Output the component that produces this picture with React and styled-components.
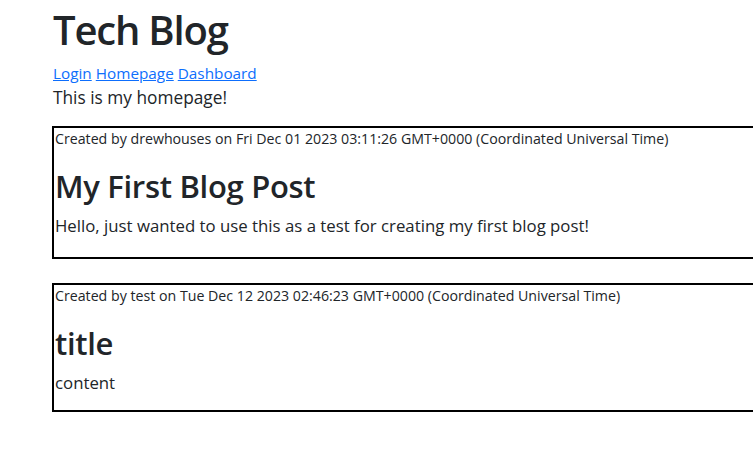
import React from "react";
import styled, { createGlobalStyle } from "styled-components";

const Global = createGlobalStyle`
  html, body { margin: 0; padding: 0; background: #fff; }
  body {
    font-family: "Open Sans", "Noto Sans", sans-serif;
    font-size: 16px;
    line-height: 1.5;
    color: #212529;
    overflow: hidden;
  }
`;

const Page = styled.div`
  padding: 6px 0 0 52px;
`;

const Title = styled.h1`
  margin: 0 0 7px 1px;
  font-size: 40px;
  font-weight: 600;
  line-height: 48px;
  letter-spacing: -1.2px;
`;

const Nav = styled.nav`
  display: flex;
  gap: 4px;
  padding-left: 1px;
  font-size: 15.3px;
  line-height: 24px;
`;

const NavLink = styled.a`
  color: #0d6efd;
  text-decoration: underline;
`;

const Intro = styled.p`
  margin: 0 0 15px 1px;
  font-size: 17.3px;
  line-height: 26px;
`;

const Post = styled.article`
  border: 2px solid #000;
  width: 760px;
  margin-bottom: 24px;
`;

const Meta = styled.small`
  display: block;
  font-size: 14.2px;
  line-height: 22px;
  padding-left: 1px;
`;

const PostTitle = styled.h2`
  margin: 18px 0 8px 1px;
  font-size: 31px;
  font-weight: 600;
  line-height: 37px;
  letter-spacing: -0.3px;
`;

const Body = styled.p`
  margin: 0 0 ${(p) => p.$tail}px 1px;
  font-size: 16.8px;
  line-height: 26px;
`;

const posts = [
  {
    meta: "Created by drewhouses on Fri Dec 01 2023 03:11:26 GMT+0000 (Coordinated Universal Time)",
    title: "My First Blog Post",
    body: "Hello, just wanted to use this as a test for creating my first blog post!",
    tail: 18,
  },
  {
    meta: "Created by test on Tue Dec 12 2023 02:46:23 GMT+0000 (Coordinated Universal Time)",
    title: "title",
    body: "content",
    tail: 14,
  },
];

export default function App() {
  return (
    <>
      <Global />
      <Page>
        <Title>Tech Blog</Title>
        <Nav>
          <NavLink href="#">Login</NavLink>
          <NavLink href="#">Homepage</NavLink>
          <NavLink href="#">Dashboard</NavLink>
        </Nav>
        <Intro>This is my homepage!</Intro>
        {posts.map((p) => (
          <Post key={p.title}>
            <Meta>{p.meta}</Meta>
            <PostTitle>{p.title}</PostTitle>
            <Body $tail={p.tail}>{p.body}</Body>
          </Post>
        ))}
      </Page>
    </>
  );
}
